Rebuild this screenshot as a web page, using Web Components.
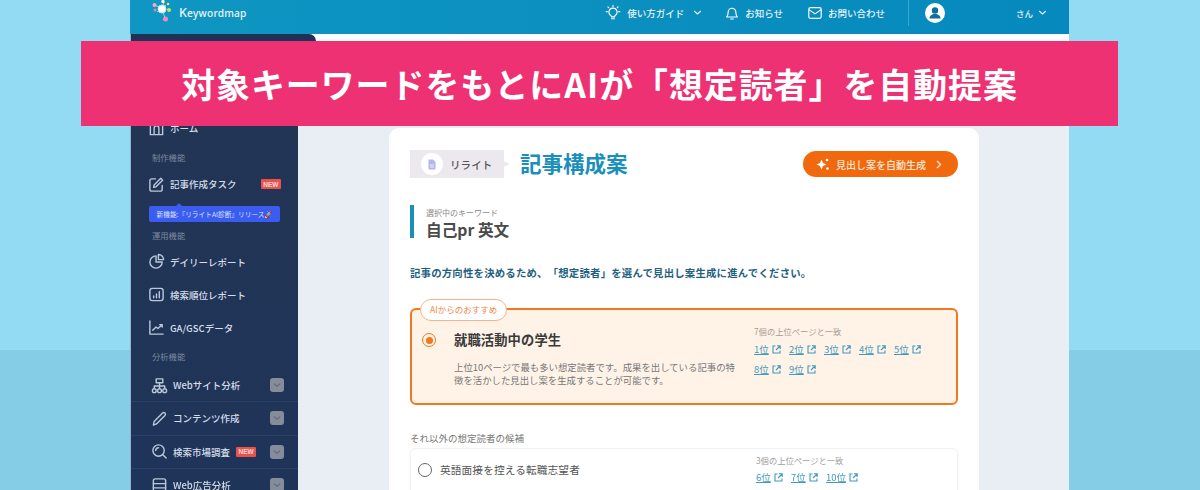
<!DOCTYPE html>
<html lang="ja">
<head>
<meta charset="utf-8">
<title>Keywordmap</title>
<style>
  html, body { margin: 0; height: 490px; overflow: hidden; }
  body {
    font-family: "Noto Sans CJK JP", "Noto Sans", sans-serif;
    background: linear-gradient(#93daf3 0, #93daf3 350px, #85cde6 350px);
  }
</style>
</head>
<body>
<promo-page>
  <promo-banner slot="banner">対象キーワードをもとにAIが「想定読者」を自動提案</promo-banner>
  <app-header slot="header"></app-header>
  <side-nav slot="side"></side-nav>
  <article-card slot="main"></article-card>
</promo-page>

<script>
const icons = {
  bulb: '<path d="M9 3.500a4.500 4.500 0 0 0-2.600 8.200c.5.4.8 1 .8 1.600h3.600c0-.6.3-1.200.8-1.600A4.500 4.500 0 0 0 9 3.500zM7.400 15.500h3.200M9 .6v1.200M2.600 7.500H1.400M16.600 7.500h-1.200M4.200 3l-.9-.9M13.800 3l.9-.9"/>',
  bell: '<path d="M3 13.500h12c-1-1.200-1.700-2-1.700-5.500a4.300 4.300 0 0 0-8.600 0c0 3.500-.7 4.300-1.700 5.500zM7.500 15.800h3"/>',
  mail: '<rect x="2" y="3" width="14" height="12" rx="2"/><path d="M2.500 5.500 9 10l6.500-4.500"/>',
  chevron: '<path d="M4 7l5 4.500L14 7"/>',
  home: '<path d="M2.500 3.500h13v12h-13zM6.500 15V8.500a2.500 2.500 0 0 1 5 0V15M1.500 3.500h15"/>',
  edit: '<path d="M15 10v4a2 2 0 0 1-2 2H4a2 2 0 0 1-2-2V5a2 2 0 0 1 2-2h4M6.500 9.500 13.500 2.500l2 2-7 7-2.500.5z"/>',
  pie: '<path d="M8.500 3a6.500 6.500 0 1 0 6.500 6.500H8.500zM11 1.500A5.500 5.500 0 0 1 16.500 7H11z"/>',
  bars: '<rect x="2" y="2.500" width="14" height="13" rx="2.500"/><path d="M6 12.500v-2M9 12.500V8.500M12 12.500V6"/>',
  line: '<path d="M2 2v14h14M5 12l3.500-3.500 2 1.500L15 6M12.500 6H15v2.500"/>',
  site: '<path d="M5.500 2h7v4h-7zM9 6v3M3.500 12V9.500h11V12M9 9.500V12"/><circle cx="3.500" cy="14.500" r="2"/><circle cx="9" cy="14.500" r="2"/><circle cx="14.500" cy="14.500" r="2"/>',
  pen: '<path d="M2.500 16l.8-3.800L12.500 3a1.800 1.800 0 0 1 2.500 2.500L5.800 14.700z"/>',
  search: '<circle cx="8" cy="8" r="6"/><path d="M5 8a3 3 0 0 1 3-3M12.500 12.500l3.500 3.500"/>',
  list: '<rect x="2.500" y="2" width="13" height="14" rx="2"/><path d="M2.500 7h13M2.500 11.500h13"/>'
};

function svg(name, size, color, width) {
  return `<svg width="${size}" height="${size}" viewBox="0 0 18 18" fill="none" stroke="${color}" stroke-width="${width || 1.4}" stroke-linecap="round" stroke-linejoin="round" style="display:block;flex:none">${icons[name]}</svg>`;
}

class PromoPage extends HTMLElement {
  constructor() {
    super();
    this.attachShadow({ mode: 'open' });
    this.shadowRoot.innerHTML = `
      <style>
        :host { display: block; position: relative; width: 1200px; height: 490px; overflow: hidden; }
        .window { width: 939px; height: 490px; margin-left: 130px; display: flex; flex-direction: column; filter: blur(.35px); }
        .body { flex: 1; display: flex; min-height: 0; background: #fff; }
        .main { flex: 1; min-width: 0; margin-top: 7px; padding: 87px 90px 0 91px; background: #e9eef4; overflow: hidden; }
        ::slotted([slot=banner]) { position: absolute; left: 81px; top: 41px; }
      </style>
      <slot name="banner"></slot>
      <div class="window">
        <slot name="header"></slot>
        <div class="body">
          <slot name="side"></slot>
          <div class="main"><slot name="main"></slot></div>
        </div>
      </div>
    `;
  }
}

class PromoBanner extends HTMLElement {
  constructor() {
    super();
    this.attachShadow({ mode: 'open' });
    this.shadowRoot.innerHTML = `
      <style>
        :host {
          display: flex; align-items: center; justify-content: center;
          width: 1037px; height: 85px; z-index: 5;
          background: #ee3172; color: #fff;
          font-size: 33.9px; font-weight: 700; letter-spacing: 1px; white-space: nowrap;
        }
      </style>
      <slot></slot>
    `;
  }
}

class AppHeader extends HTMLElement {
  constructor() {
    super();
    this.attachShadow({ mode: 'open' });
    this.shadowRoot.innerHTML = `
      <style>
        :host {
          display: flex; align-items: center; height: 34px; flex: none; box-sizing: border-box; padding-bottom: 9px;
          background: linear-gradient(90deg, #0f96c2, #0689bd);
          color: #e6f4fa; font-size: 9.5px; font-weight: 500;
        }
        .logo { display: flex; align-items: center; margin-left: 21px; gap: 2px; }
        .logo span { font: 500 10.2px "Noto Sans", sans-serif; color: #eaf6fb; letter-spacing: .2px; }
        .logo b { font-weight: 500; font-size: 12.5px; }
        .item { display: flex; align-items: center; gap: 5px; white-space: nowrap; }
        .guide { margin-left: auto; gap: 6px; }
        .guide svg:last-child { margin-left: 2px; }
        .notice { margin-left: 21px; }
        .contact { margin-left: 24px; }
        .divider { width: 1px; height: 26px; background: #3ba6cc; margin-left: 23px; }
        .avatar { margin-left: 16px; }
        .user { margin-left: 71px; margin-right: 21px; gap: 4px; font-size: 8.5px; }
      </style>
      <div class="logo">
        <svg width="26" height="26" viewBox="0 0 26 26" style="display:block;overflow:visible">
          <path d="M11 9 4 5M11 9l2-7M11 9l4-4M11 9l-5 3M11 9l3 9" stroke="#d5eef7" stroke-width=".7"/>
          <circle cx="11" cy="9" r="4" fill="#fff" stroke="#bfe6f4" stroke-width="1"/>
          <circle cx="3.5" cy="5" r="2" fill="#f4a6cf"/><circle cx="4" cy="10" r="1.5" fill="#f07bb4"/>
          <circle cx="12" cy="1.5" r="1.7" fill="#fff"/><circle cx="17" cy="4" r="1.3" fill="#ffe26a"/>
          <circle cx="18" cy="10" r="2" fill="#c7e46a"/><circle cx="14.5" cy="19" r="2.5" fill="#f28ac4"/>
        </svg>
        <span><b>K</b>eywordmap</span>
      </div>
      <div class="item guide">${svg('bulb', 16, '#fff', 1.3)}<span>使い方ガイド</span>${svg('chevron', 11, '#e6f4fa', 1.8)}</div>
      <div class="item notice">${svg('bell', 16, '#fff', 1.3)}<span>お知らせ</span></div>
      <div class="item contact">${svg('mail', 16, '#fff', 1.3)}<span>お問い合わせ</span></div>
      <div class="divider"></div>
      <svg class="avatar" width="20" height="20" viewBox="0 0 20 20" style="display:block">
        <circle cx="10" cy="10" r="10" fill="#fff"/>
        <circle cx="10" cy="7.5" r="3.2" fill="#0d6f9b"/>
        <path d="M4.500 15.500c0-3 2.500-4.500 5.500-4.500s5.500 1.500 5.500 4.500z" fill="#0d6f9b"/>
      </svg>
      <div class="item user"><span>さん</span>${svg('chevron', 11, '#e6f4fa', 1.8)}</div>
    `;
  }
}

class NavItem extends HTMLElement {
  constructor() {
    super();
    this.attachShadow({ mode: 'open' });
  }

  connectedCallback() {
    const fold = this.hasAttribute('fold');
    const badge = this.hasAttribute('new');
    this.shadowRoot.innerHTML = `
      <style>
        :host {
          display: flex; align-items: center; height: 33px; padding-left: 17px; box-sizing: border-box;
          color: #d5dde8; font-size: 9.5px; font-weight: 500; white-space: nowrap;
        }
        :host([fold]) { height: 33.3px; padding-left: 20px; border-bottom: 1px solid #2b4066; }
        .text { margin-left: 5px; }
        .new {
          background: #e8524c; color: #f9d9d6; font: 700 6.5px "Liberation Sans", sans-serif;
          padding: 1.5px 2.5px; border-radius: 1px; line-height: 7px;
        }
        .right { margin-left: auto; margin-right: 17px; }
        .inline { margin-left: 6px; }
        .fold {
          width: 14px; height: 14px; border-radius: 3px; background: #858d9a; margin-right: 14px;
          margin-left: auto; display: flex; align-items: center; justify-content: center;
        }
      </style>
      ${svg(this.getAttribute('icon'), 17, '#b9c8da', 1.5)}
      <span class="text"><slot></slot></span>
      ${badge ? `<span class="new ${fold ? 'inline' : 'right'}">NEW</span>` : ''}
      ${fold ? `<span class="fold">${svg('chevron', 10, '#5f6b7c', 2.2)}</span>` : ''}
    `;
  }
}

class NavLabel extends HTMLElement {
  constructor() {
    super();
    this.attachShadow({ mode: 'open' });
    this.shadowRoot.innerHTML = `
      <style>
        :host { display: block; height: 16px; line-height: 16px; padding-left: 21px; color: #7c8a9f; font-size: 8.3px; }
      </style>
      <slot></slot>
    `;
  }
}

class SideNav extends HTMLElement {
  constructor() {
    super();
    this.attachShadow({ mode: 'open' });
    this.shadowRoot.innerHTML = `
      <style>
        :host {
          display: block; position: relative; flex: none; width: 167px; margin-left: 1px;
          background: linear-gradient(#233554, #1f3459); padding-top: 79px; box-sizing: border-box;
          box-shadow: -1px 0 0 #8fb4c9;
        }
        .tab { position: absolute; left: 0; top: 0; width: 185px; height: 7px; background: #1f3157; border-radius: 0 10px 0 0; }
        .home { margin-bottom: 6px; height: 30px; }
        .first { margin-top: 4px; height: 30px; }
        .tip {
          position: relative; display: block; margin: 7px 18px 5px 18px; height: 16px; line-height: 16px;
          background: #3a5cf0; border-radius: 2px; color: #dfe5fd; font-size: 6.7px; text-align: center; white-space: nowrap;
        }
        .tip::before {
          content: ""; position: absolute; left: 27px; top: -3px;
          border: 3px solid transparent; border-top: 0; border-bottom-color: #3a5cf0;
        }
        .gap { margin-top: 2px; }
        nav-label.last { margin-top: 4px; margin-bottom: 5px; }
      </style>
      <div class="tab"></div>
      <nav-item class="home" icon="home">ホーム</nav-item>
      <nav-label>制作機能</nav-label>
      <nav-item class="first" icon="edit" new>記事作成タスク</nav-item>
      <span class="tip">新機能:『リライトAI診断』リリース🚀</span>
      <nav-label>運用機能</nav-label>
      <nav-item class="gap" icon="pie">デイリーレポート</nav-item>
      <nav-item icon="bars">検索順位レポート</nav-item>
      <nav-item icon="line">GA/GSCデータ</nav-item>
      <nav-label class="last">分析機能</nav-label>
      <nav-item icon="site" fold>Webサイト分析</nav-item>
      <nav-item icon="pen" fold>コンテンツ作成</nav-item>
      <nav-item icon="search" fold new>検索市場調査</nav-item>
      <nav-item icon="list" fold>Web広告分析</nav-item>
    `;
  }
}

class RankLink extends HTMLElement {
  constructor() {
    super();
    this.attachShadow({ mode: 'open' });
    this.shadowRoot.innerHTML = `
      <style>
        :host { display: inline-flex; align-items: center; gap: 3px; width: 35px; color: #3f9ac0; font-size: 9.5px; white-space: nowrap; }
        span { text-decoration: underline; text-underline-offset: 1px; }
      </style>
      <span><slot></slot></span>
      <svg width="9" height="9" viewBox="0 0 9 9" fill="none" stroke="#3f9ac0" stroke-width="1.1" style="display:block">
        <path d="M3.500 1H1v7h7V5.500M5 .8h3.200V4M8 1 4 5"/>
      </svg>
    `;
  }
}

class PersonaCard extends HTMLElement {
  constructor() {
    super();
    this.attachShadow({ mode: 'open' });
  }

  connectedCallback() {
    const ranks = this.getAttribute('ranks').split(',');
    this.shadowRoot.innerHTML = `
      <style>
        :host {
          display: flex; position: relative; box-sizing: border-box; border-radius: 6px;
          background: #fff; border: 1px solid #f1f2f5; box-shadow: 0 1px 3px rgba(0,0,0,.04);
          height: 60px; padding-left: 7px; color: #555;
        }
        :host([picked]) {
          height: 97px; border: 2px solid #f0781e; background: #fff3e8; box-shadow: none; padding-left: 10px;
        }
        .pill {
          position: absolute; left: 8px; top: -11px; height: 20px; line-height: 19px; padding: 0 9px;
          background: #fff; border: 1px solid #f6b48e; border-radius: 11px; color: #f0854a; font-size: 8.5px; white-space: nowrap;
        }
        .radio { flex: none; width: 14px; height: 14px; box-sizing: border-box; border-radius: 50%; border: 1.5px solid #666; margin-top: 14px; }
        :host([picked]) .radio { border-color: #f0781e; margin-top: 23px; padding: 2.5px; background-clip: content-box; background-color: #f0781e; }
        .text { width: 300px; margin-left: 8px; flex: none; }
        :host([picked]) .text { width: 284px; margin-left: 18px; }
        .title { font-size: 10.7px; line-height: 16px; margin-top: 13px; white-space: nowrap; letter-spacing: .1px; }
        :host([picked]) .title { font-size: 13.3px; font-weight: 700; color: #3a3a3a; line-height: 20px; margin-top: 20px; }
        .desc { font-size: 9.4px; line-height: 13px; margin-top: 11px; color: #777; }
        .match { margin-left: 16px; flex: none; }
        .count { font-size: 8.3px; line-height: 12px; margin-top: 5px; color: #a0a0a0; white-space: nowrap; }
        :host([picked]) .count { margin-top: 15px; color: #a89c92; }
        .links { display: flex; flex-wrap: wrap; width: 180px; row-gap: 6px; margin-top: 4px; line-height: 14px; }
        :host([picked]) .links { margin-top: 5px; }
      </style>
      ${this.hasAttribute('pill') ? `<div class="pill">${this.getAttribute('pill')}</div>` : ''}
      <div class="radio"></div>
      <div class="text">
        <div class="title">${this.getAttribute('title-text')}</div>
        ${this.hasAttribute('desc') ? `<div class="desc">${this.getAttribute('desc')}</div>` : ''}
      </div>
      <div class="match">
        <div class="count">${this.getAttribute('count')}</div>
        <div class="links">${ranks.map((r) => `<rank-link>${r}位</rank-link>`).join('')}</div>
      </div>
    `;
  }
}

class ArticleCard extends HTMLElement {
  constructor() {
    super();
    this.attachShadow({ mode: 'open' });
    this.shadowRoot.innerHTML = `
      <style>
        :host {
          display: block; height: 362px; box-sizing: border-box; padding: 22px 21px 0;
          background: #fff; border-radius: 10px 10px 0 0; overflow: hidden;
        }
        .head { display: flex; align-items: center; height: 28px; }
        .tag {
          display: flex; align-items: center; width: 100px; height: 28px; box-sizing: border-box; padding-left: 11px; gap: 7px;
          background: #ece9ee; color: #555; font-size: 10.5px; font-weight: 500; letter-spacing: .1px;
          clip-path: polygon(0 0, 94% 0, 94% 40%, 100% 50%, 94% 60%, 94% 100%, 0 100%);
        }
        .dot { width: 22px; height: 22px; border-radius: 50%; background: #fff; display: flex; align-items: center; justify-content: center; }
        h1 { margin: 0 0 2px 10px; color: #1a8fbb; font-size: 21.5px; font-weight: 700; line-height: 28px; white-space: nowrap; }
        .gen {
          margin-left: auto; display: flex; align-items: center; width: 155px; height: 26px; box-sizing: border-box; padding-left: 13px;
          background: #f0690f; color: #fde6d4; border-radius: 13px; font-size: 10px; font-weight: 500; white-space: nowrap;
        }
        .gen svg:last-child { margin-left: auto; margin-right: 15px; }
        .keyword { display: block; margin-top: 27px; height: 33px; border-left: 4px solid #1a8fbb; padding-left: 12px; }
        .kw-label { font-size: 8px; line-height: 11px; color: #8a8a8a; padding-top: 2px; }
        .kw { font-size: 15.7px; font-weight: 700; line-height: 20px; color: #4a4a4a; margin-top: 2px; }
        .lead { margin: 27px 0 0; font-size: 10.4px; line-height: 16px; font-weight: 700; color: #1f5f80; letter-spacing: .2px; white-space: nowrap; text-spacing-trim: space-all; }
        persona-card { margin-top: 27px; }
        .other { margin: 27px 0 3px; font-size: 9.5px; line-height: 13px; color: #777; }
        persona-card.rest { margin-top: 0; }
      </style>
      <div class="head">
        <div class="tag">
          <span class="dot">
            <svg width="10" height="11" viewBox="0 0 10 11" style="display:block"><path d="M1.500 .5h4.500l2.500 2.500v7.500h-7z" fill="#b6b4ee"/><path d="M3 6h4M3 8h4" stroke="#fff" stroke-width=".8"/></svg>
          </span>
          <span>リライト</span>
        </div>
        <h1>記事構成案</h1>
        <div class="gen">
          <svg width="14" height="14" viewBox="0 0 14 14" fill="#fff" style="display:block;margin-right:6px">
            <path d="M5.500 2.500 7 6l3.500 1.500L7 9l-1.500 3.500L4 9 .5 7.500 4 6z"/><circle cx="11" cy="3" r="1.300"/><circle cx="11.500" cy="11.500" r="1.300"/>
          </svg>
          <span>見出し案を自動生成</span>
          <svg width="9" height="9" viewBox="0 0 9 9" fill="none" stroke="#fde6d4" stroke-width="1.3" style="display:block"><path d="M3 1l3.500 3.500L3 8"/></svg>
        </div>
      </div>
      <div class="keyword">
        <div class="kw-label">選択中のキーワード</div>
        <div class="kw">自己pr 英文</div>
      </div>
      <p class="lead">記事の方向性を決めるため、「想定読者」を選んで見出し案生成に進んでください。</p>
      <persona-card picked pill="AIからのおすすめ" title-text="就職活動中の学生"
        desc="上位10ページで最も多い想定読者です。成果を出している記事の特徴を活かした見出し案を生成することが可能です。"
        count="7個の上位ページと一致" ranks="1,2,3,4,5,8,9"></persona-card>
      <div class="other">それ以外の想定読者の候補</div>
      <persona-card class="rest" title-text="英語面接を控える転職志望者"
        count="3個の上位ページと一致" ranks="6,7,10"></persona-card>
    `;
  }
}

customElements.define('promo-page', PromoPage);
customElements.define('promo-banner', PromoBanner);
customElements.define('app-header', AppHeader);
customElements.define('nav-item', NavItem);
customElements.define('nav-label', NavLabel);
customElements.define('side-nav', SideNav);
customElements.define('rank-link', RankLink);
customElements.define('persona-card', PersonaCard);
customElements.define('article-card', ArticleCard);
</script>
</body>
</html>
